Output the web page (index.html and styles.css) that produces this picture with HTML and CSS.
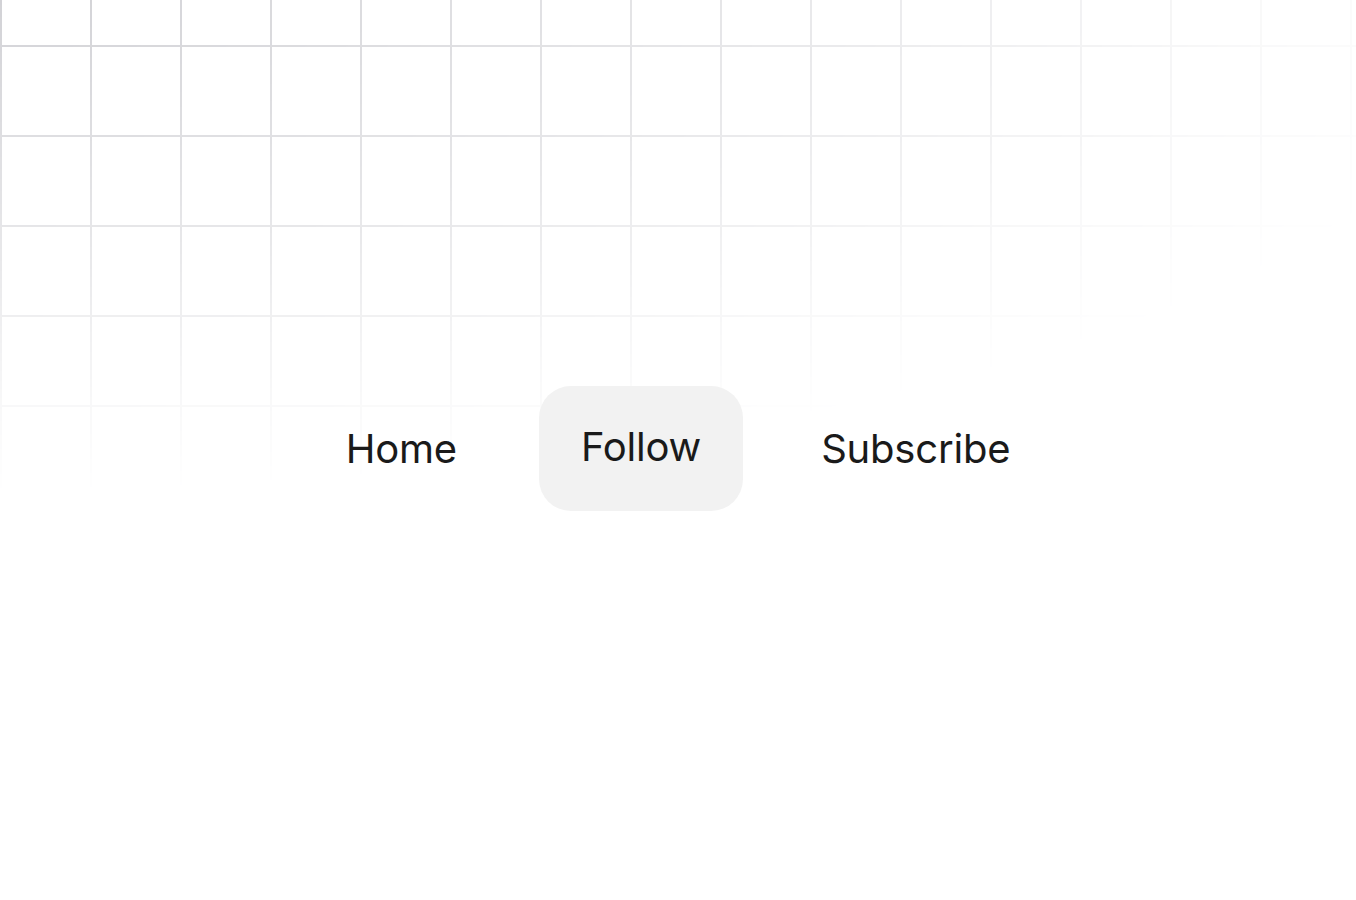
FILE: index.html
```html
<!DOCTYPE html>
<html lang="en">
<head>
<meta charset="utf-8">
<title>Nav</title>
<link rel="stylesheet" href="styles.css">
</head>
<body>
<div class="grid"></div>
<main class="stage">
  <nav class="nav">
    <a class="item" href="#">Home</a>
    <a class="item active" href="#"><span class="label">Follow</span></a>
    <a class="item" href="#">Subscribe</a>
  </nav>
</main>
</body>
</html>
```
FILE: styles.css
```css
html, body {
  margin: 0;
  padding: 0;
  height: 100%;
  background: #ffffff;
}
body {
  font-family: Inter, "Noto Sans", sans-serif;
  color: #1a1a1a;
  overflow: hidden;
}
.grid {
  position: absolute;
  inset: 0;
  background-image:
    linear-gradient(to right, #d2d2d6 2px, transparent 2px),
    linear-gradient(to bottom, #d2d2d6 2px, transparent 2px);
  background-size: 90px 90px;
  background-position: 0 45px;
  -webkit-mask-image: radial-gradient(ellipse 1600px 520px at 0 0, #000 0%, rgba(0,0,0,0.5) 50%, rgba(0,0,0,0.15) 78%, transparent 95%);
  mask-image: radial-gradient(ellipse 1600px 520px at 0 0, #000 0%, rgba(0,0,0,0.5) 50%, rgba(0,0,0,0.15) 78%, transparent 95%);
  pointer-events: none;
}
.stage {
  position: relative;
  height: 100%;
  display: flex;
  align-items: center;
  justify-content: center;
}
.nav {
  display: flex;
  align-items: center;
  gap: 38px;
  margin-top: -3px;
}
.item {
  display: flex;
  align-items: center;
  justify-content: center;
  height: 125px;
  padding: 0 40px;
  border-radius: 32px;
  font-size: 40px;
  font-weight: 400;
  color: #1a1a1a;
  text-decoration: none;
  letter-spacing: -0.2px;
}
.active {
  background: #f2f2f2;
  padding: 0 42px;
  margin-left: 4px;
}
.active .label {
  transform: translateY(-2px);
}
```
